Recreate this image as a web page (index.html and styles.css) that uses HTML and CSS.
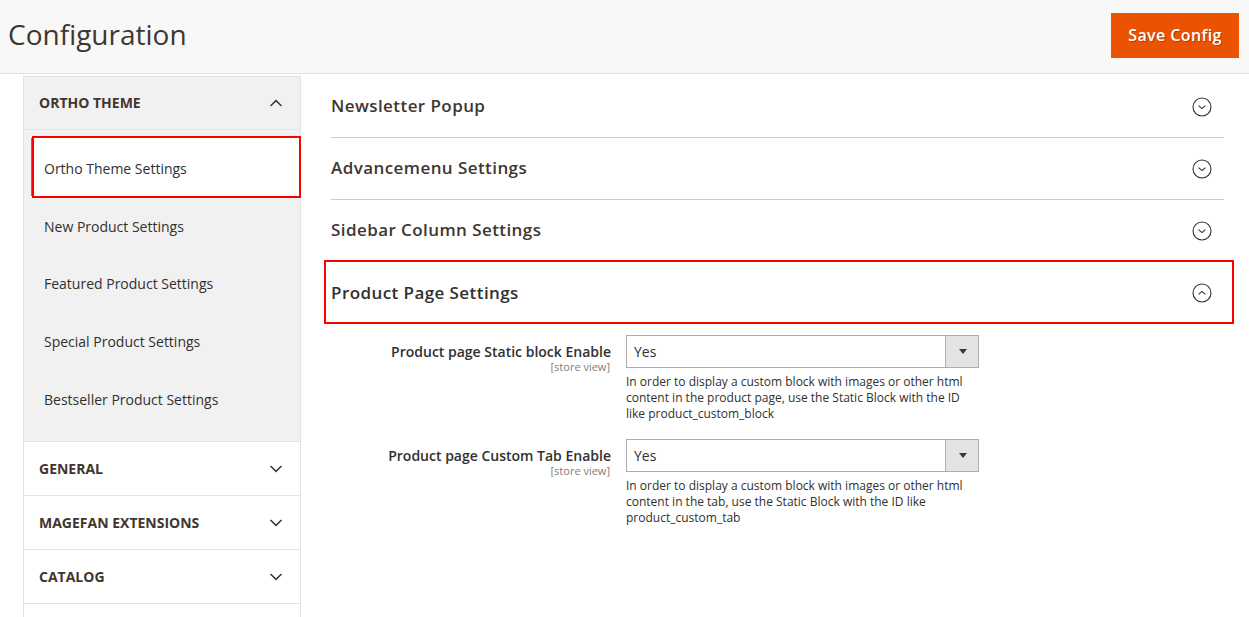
FILE: index.html
```html
<!DOCTYPE html>
<html lang="en">
<head>
<meta charset="utf-8">
<title>Configuration</title>
<link rel="stylesheet" href="styles.css">
</head>
<body>
<header class="page-header">
  <h1 class="page-title">Configuration</h1>
  <button class="btn-primary" type="button">Save Config</button>
</header>
<div class="page-body">
  <aside class="side-nav">
    <div class="nav-group open">
      <div class="nav-title">
        <span>Ortho Theme</span>
        <svg class="chev" width="14" height="8" viewBox="0 0 14 8"><path d="M1.5 7 L7 1.6 L12.5 7" fill="none" stroke="#41362f" stroke-width="1.5"/></svg>
      </div>
      <ul class="nav-items">
        <li class="nav-item active"><a>Ortho Theme Settings</a></li>
        <li class="nav-item"><a>New Product Settings</a></li>
        <li class="nav-item"><a>Featured Product Settings</a></li>
        <li class="nav-item"><a>Special Product Settings</a></li>
        <li class="nav-item"><a>Bestseller Product Settings</a></li>
      </ul>
    </div>
    <div class="nav-group">
      <div class="nav-title">
        <span>General</span>
        <svg class="chev down" width="14" height="8" viewBox="0 0 14 8"><path d="M1.5 1 L7 6.4 L12.5 1" fill="none" stroke="#41362f" stroke-width="1.5"/></svg>
      </div>
    </div>
    <div class="nav-group">
      <div class="nav-title">
        <span>Magefan Extensions</span>
        <svg class="chev down" width="14" height="8" viewBox="0 0 14 8"><path d="M1.5 1 L7 6.4 L12.5 1" fill="none" stroke="#41362f" stroke-width="1.5"/></svg>
      </div>
    </div>
    <div class="nav-group">
      <div class="nav-title">
        <span>Catalog</span>
        <svg class="chev down" width="14" height="8" viewBox="0 0 14 8"><path d="M1.5 1 L7 6.4 L12.5 1" fill="none" stroke="#41362f" stroke-width="1.5"/></svg>
      </div>
    </div>
    <div class="nav-group">
      <div class="nav-title"></div>
    </div>
  </aside>

  <main class="content">
    <section class="fieldset">
      <div class="fs-head">
        <span>Newsletter Popup</span>
        <svg class="circ" width="20" height="20" viewBox="0 0 20 20"><circle cx="10" cy="10" r="9" fill="none" stroke="#303030" stroke-width="1.1"/><path d="M6.6 8.6 L10 11.6 L13.4 8.6" fill="none" stroke="#303030" stroke-width="1.1"/></svg>
      </div>
    </section>
    <section class="fieldset">
      <div class="fs-head">
        <span>Advancemenu Settings</span>
        <svg class="circ" width="20" height="20" viewBox="0 0 20 20"><circle cx="10" cy="10" r="9" fill="none" stroke="#303030" stroke-width="1.1"/><path d="M6.6 8.6 L10 11.6 L13.4 8.6" fill="none" stroke="#303030" stroke-width="1.1"/></svg>
      </div>
    </section>
    <section class="fieldset">
      <div class="fs-head">
        <span>Sidebar Column Settings</span>
        <svg class="circ" width="20" height="20" viewBox="0 0 20 20"><circle cx="10" cy="10" r="9" fill="none" stroke="#303030" stroke-width="1.1"/><path d="M6.6 8.6 L10 11.6 L13.4 8.6" fill="none" stroke="#303030" stroke-width="1.1"/></svg>
      </div>
    </section>
    <section class="fieldset open">
      <div class="fs-head marked">
        <span class="strong">Product Page Settings</span>
        <svg class="circ" width="20" height="20" viewBox="0 0 20 20"><circle cx="10" cy="10" r="9" fill="none" stroke="#303030" stroke-width="1.1"/><path d="M6.6 11.4 L10 8.4 L13.4 11.4" fill="none" stroke="#303030" stroke-width="1.1"/></svg>
      </div>
      <div class="fs-body">
        <div class="field-row">
          <div class="field-label">
            <div class="label-text">Product page Static block Enable</div>
            <div class="scope">[store view]</div>
          </div>
          <div class="field-control">
            <div class="select"><span class="select-value">Yes</span><span class="select-btn"><span class="tri"></span></span></div>
            <p class="note">In order to display a custom block with images or other html content in the product page, use the Static Block with the ID like product_custom_block</p>
          </div>
        </div>
        <div class="field-row">
          <div class="field-label">
            <div class="label-text">Product page Custom Tab Enable</div>
            <div class="scope">[store view]</div>
          </div>
          <div class="field-control">
            <div class="select"><span class="select-value">Yes</span><span class="select-btn"><span class="tri"></span></span></div>
            <p class="note">In order to display a custom block with images or other html content in the tab, use the Static Block with the ID like product_custom_tab</p>
          </div>
        </div>
      </div>
    </section>
  </main>
</div>
</body>
</html>
```

FILE: styles.css
```css
* { box-sizing: border-box; }
html, body { margin: 0; padding: 0; }
body {
  font-family: "Open Sans", "Liberation Sans", sans-serif;
  color: #303030;
  background: #fff;
  width: 1249px;
  height: 617px;
  overflow: hidden;
}

.page-header {
  height: 74px;
  background: #f8f8f8;
  border-bottom: 1px solid #e3e3e3;
  display: flex;
  align-items: center;
  justify-content: space-between;
  padding: 0 10px 0 8px;
}
.page-title {
  margin: 0;
  font-size: 28px;
  font-weight: 400;
  color: #41362f;
  line-height: 36px;
  margin-top: -5px;
}
.btn-primary {
  width: 128px;
  height: 45px;
  margin-top: -3px;
  background: #eb5202;
  border: 1px solid #eb5202;
  color: #fff;
  font-family: "Open Sans", "Liberation Sans", sans-serif;
  font-size: 16px;
  font-weight: 600;
  letter-spacing: .025em;
  text-shadow: 1px 1px 0 rgba(0,0,0,.25);
  padding: 0;
}

.page-body {
  display: flex;
  align-items: flex-start;
  margin-top: 2px;
}

/* sidebar */
.side-nav {
  width: 278px;
  margin-left: 23px;
  border: 1px solid #e3e3e3;
  border-bottom: 0;
  flex: none;
}
.nav-group { border-bottom: 1px solid #e3e3e3; }
.nav-group.open { background: #f1f1f1; }
.nav-title {
  height: 53px;
  display: flex;
  align-items: center;
  justify-content: space-between;
  padding: 0 17px 1px 15px;
  font-size: 14px;
  font-weight: 700;
  text-transform: uppercase;
  color: #41362f;
}
.nav-group.open .nav-title { border-bottom: 1px solid #e3e3e3; }
.chev { display: block; }
.chev.down { margin-top: 2px; }
.nav-items {
  list-style: none;
  margin: 0;
  padding: 8px 0 14.25px;
}
.nav-item {
  position: relative;
  margin-left: 7px;
  border-left: 3px solid transparent;
  height: 57.75px;
  display: flex;
  align-items: center;
}
.nav-item a {
  padding-left: 10px;
  padding-top: 4px;
  font-size: 14px;
  line-height: 18px;
  color: #303030;
}
.nav-item.active {
  background: #fff;
  border-left-color: #eb5202;
}
.nav-item.active::after {
  content: "";
  position: absolute;
  left: -2px;
  right: -1px;
  top: -2px;
  bottom: -2px;
  border: 2px solid #ff0000;
}

/* content */
.content {
  width: 893px;
  margin-left: 30px;
  flex: none;
}
.fieldset { border-bottom: 1px solid #cccccc; }
.fieldset.open { border-bottom: 0; }
.fs-head {
  position: relative;
  height: 61px;
  display: flex;
  align-items: center;
  justify-content: space-between;
  padding-right: 12px;
  font-size: 17px;
  font-weight: 600;
  letter-spacing: .025em;
  color: #41362f;
}
.fs-head > span { margin-bottom: 2px; }
.fs-head.marked > span { margin-bottom: 0; }
.fs-head .strong { color: #303030; }
.fs-head.marked::after {
  content: "";
  position: absolute;
  left: -7px;
  right: -10px;
  top: -2px;
  bottom: -1px;
  border: 2px solid #ff0000;
}
.circ { display: block; }

.fs-body { padding-top: 12px; }
.field-row {
  display: grid;
  grid-template-columns: 280px 353px;
  column-gap: 15px;
  margin-bottom: 17px;
}
.field-label {
  text-align: right;
  padding-top: 8px;
}
.label-text {
  font-size: 14px;
  font-weight: 600;
  line-height: 18px;
  color: #303030;
}
.scope {
  font-size: 11px;
  line-height: 12px;
  color: #808080;
  margin-right: 1px;
}
.select {
  height: 33px;
  border: 1px solid #adadad;
  background: #fff;
  display: flex;
  align-items: stretch;
}
.select-value {
  flex: 1;
  font-size: 14px;
  line-height: 31px;
  padding-left: 7px;
  color: #303030;
}
.select-btn {
  width: 33px;
  background: #e3e3e3;
  border-left: 1px solid #adadad;
  display: flex;
  align-items: center;
  justify-content: center;
}
.tri {
  width: 0;
  height: 0;
  border-left: 4px solid transparent;
  border-right: 4px solid transparent;
  border-top: 5px solid #41362f;
  margin-left: 1px;
}
.note {
  margin: 6px 0 0;
  font-size: 12px;
  line-height: 16px;
  color: #303030;
}
```
